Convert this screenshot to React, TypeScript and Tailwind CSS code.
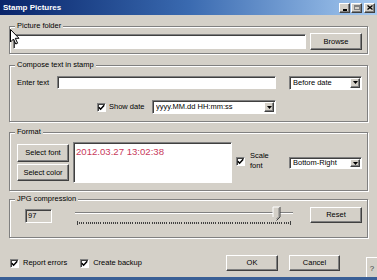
import React from "react";

type P = { className?: string; children?: React.ReactNode };

function Btn({ className = "", children }: P) {
  return (
    <div
      className={`flex items-center justify-center bg-[#d4d0c8] border border-t-white border-l-white border-r-[#404040] border-b-[#404040] shadow-[inset_-1px_-1px_0_#808080] ${className}`}
    >
      {children}
    </div>
  );
}

function Sunken({ className = "", children }: P) {
  return (
    <div
      className={`border border-t-[#808080] border-l-[#808080] border-r-white border-b-white shadow-[inset_1px_1px_0_#404040] ${className}`}
    >
      {children}
    </div>
  );
}

function Check({ className = "" }: P) {
  return (
    <Sunken className={`w-[9px] h-[9px] shrink-0 bg-white flex items-center justify-center ${className}`}>
      <svg width="7" height="7" viewBox="0 0 7 7">
        <path d="M0.8 3.2 L2.6 5.2 L6.2 1.2" stroke="black" strokeWidth="1.5" fill="none" />
      </svg>
    </Sunken>
  );
}

function Select({ text, className = "" }: { text: string; className?: string }) {
  return (
    <Sunken className={`bg-white flex items-center pl-[3px] pr-[1px] ${className}`}>
      <span className="flex-1 truncate leading-none">{text}</span>
      <Btn className="w-[10px] h-[calc(100%-2px)]">
        <svg width="5" height="3" viewBox="0 0 5 3">
          <path d="M0 0 H5 L2.5 3 Z" fill="black" />
        </svg>
      </Btn>
    </Sunken>
  );
}

function Group({ label, className = "", children }: { label: string; className?: string; children?: React.ReactNode }) {
  return (
    <div className={`relative border border-[#808080] shadow-[inset_1px_1px_0_#fff,1px_1px_0_#fff] ${className}`}>
      <span className="absolute left-[5px] top-[-6px] px-[2px] bg-[#d4d0c8] leading-[10px]">{label}</span>
      {children}
    </div>
  );
}

function Slider() {
  const ticks = [];
  for (let i = 0; i <= 100; i++) {
    const x = 4 + (i * 213) / 100;
    ticks.push(<rect key={i} x={Math.round(x)} y={i === 0 || i === 100 ? 16 : 17} width="1" height={i === 0 || i === 100 ? 4 : 2} fill="#404040" />);
  }
  return (
    <svg width="222" height="22" viewBox="0 0 222 22" className="shrink-0">
      <rect x="2" y="7" width="218" height="1" fill="#808080" />
      <rect x="2" y="8" width="218" height="1" fill="#ffffff" />
      {ticks}
      <path d="M200 2 H207 V12 L203.5 15.5 L200 12 Z" fill="#d4d0c8" />
      <path d="M200 12 V2 H207" stroke="#ffffff" strokeWidth="1" fill="none" />
      <path d="M207 2 V12 L203.5 15.5" stroke="#404040" strokeWidth="1" fill="none" />
      <path d="M206 3 V11.5 L203.5 14" stroke="#808080" strokeWidth="1" fill="none" />
    </svg>
  );
}

export default function App() {
  return (
    <div className="relative w-[377px] h-[280px] overflow-hidden bg-[#d4d0c8] text-black text-[7.5px] font-['Liberation_Sans',Arial,sans-serif] flex flex-col">
      {/* Title bar */}
      <div className="h-[15px] shrink-0 bg-linear-to-r from-[#0a246a] via-[#3a6ab0] to-[#a6caf0] flex items-center pl-[3px] pr-[2px]">
        <span className="text-white font-bold text-[8px] leading-none">Stamp Pictures</span>
        <div className="ml-auto flex items-center">
          <Btn className="w-[11px] h-[10px] items-end pb-[1px]">
            <div className="w-[4px] h-[2px] bg-black" />
          </Btn>
          <Btn className="w-[11px] h-[10px] ml-[1px]">
            <div className="w-[6px] h-[5px] border border-[#808080] border-t-2" />
          </Btn>
          <Btn className="w-[11px] h-[10px] ml-[2px]">
            <svg width="6" height="5" viewBox="0 0 6 5">
              <path d="M0.5 0.5 L5.5 4.5 M5.5 0.5 L0.5 4.5" stroke="black" strokeWidth="1.3" />
            </svg>
          </Btn>
        </div>
      </div>

      <div className="ml-[9px] w-[359px] flex flex-col">
        {/* Picture folder */}
        <Group label="Picture folder" className="mt-[11px] h-[28px] pl-[3px] pt-[6px] flex items-start">
          <Sunken className="mt-[1px] w-[293px] h-[15px] bg-white" />
          <Btn className="ml-[4px] w-[52px] h-[17px]">Browse</Btn>
        </Group>

        {/* Compose text in stamp */}
        <Group label="Compose text in stamp" className="mt-[11px] h-[57px] pt-[10px] flex flex-col">
          <div className="flex items-center pl-[7px] h-[13px]">
            <span className="w-[40px]">Enter text</span>
            <Sunken className="w-[219px] h-[13px] bg-white" />
            <Select text="Before date" className="ml-[13px] w-[73px] h-[14px]" />
          </div>
          <div className="flex items-center pl-[87px] mt-[11px] h-[14px]">
            <Check />
            <span className="ml-[3px] w-[43px]">Show date</span>
            <Select text="yyyy.MM.dd HH:mm:ss" className="w-[124px] h-[14px]" />
          </div>
        </Group>

        {/* Format */}
        <Group label="Format" className="mt-[10px] h-[59px] pt-[9px] pl-[7px] pr-[5px] flex items-start">
          <div className="mt-[2px] flex flex-col gap-[2px]">
            <Btn className="w-[52px] h-[18px]">Select font</Btn>
            <Btn className="w-[52px] h-[17px]">Select color</Btn>
          </div>
          <Sunken className="ml-[4px] w-[159px] h-[41px] bg-white pl-[2px] pt-[3px]">
            <span className="text-[9.6px] leading-[11px] text-[#c83a5c]">2012.03.27 13:02:38</span>
          </Sunken>
          <Check className="ml-[4px] mt-[15px]" />
          <div className="ml-[5px] mt-[9px] flex flex-col leading-[10px]">
            <span>Scale</span>
            <span>font</span>
          </div>
          <Select text="Bottom-Right" className="ml-auto mt-[15px] w-[73px] h-[12px]" />
        </Group>

        {/* JPG compression */}
        <Group label="JPG compression" className="mt-[8px] h-[39px] pt-[9px] pl-[15px] pr-[5px] flex items-start">
          <Sunken className="w-[27px] h-[14px] flex items-center pl-[2px] bg-[#d4d0c8]">97</Sunken>
          <div className="ml-[21px] mt-[-4px]">
            <Slider />
          </div>
          <Btn className="ml-auto mt-[-2px] w-[52px] h-[16px]">Reset</Btn>
        </Group>
      </div>

      {/* Bottom row */}
      <div className="mt-[17px] h-[22px] flex items-start pl-[10px]">
        <div className="flex items-center h-[16px]">
          <Check />
          <span className="ml-[4px]">Report errors</span>
          <Check className="ml-[13px]" />
          <span className="ml-[4px]">Create backup</span>
        </div>
        <Btn className="ml-auto w-[52px] h-[16px]">OK</Btn>
        <Btn className="ml-[11px] w-[51px] h-[16px]">Cancel</Btn>
        <div className="ml-[26px] mt-[2px] w-[11px] h-[20px] bg-[#d4d0c8] border-l border-t border-white flex items-end justify-center pb-[2px] text-[#404040] text-[8px]">?</div>
      </div>

      <div className="h-[3px] shrink-0 bg-[#3a5f96]" />

      {/* mouse cursor */}
      <svg className="absolute left-[10px] top-[29px]" width="10" height="16" viewBox="0 0 10 16">
        <path d="M0.5 0.5 V13 L3.5 10 L5.8 15 L7.6 14.2 L5.3 9.3 H9 Z" fill="white" stroke="black" strokeWidth="1" strokeLinejoin="round" />
      </svg>
    </div>
  );
}
